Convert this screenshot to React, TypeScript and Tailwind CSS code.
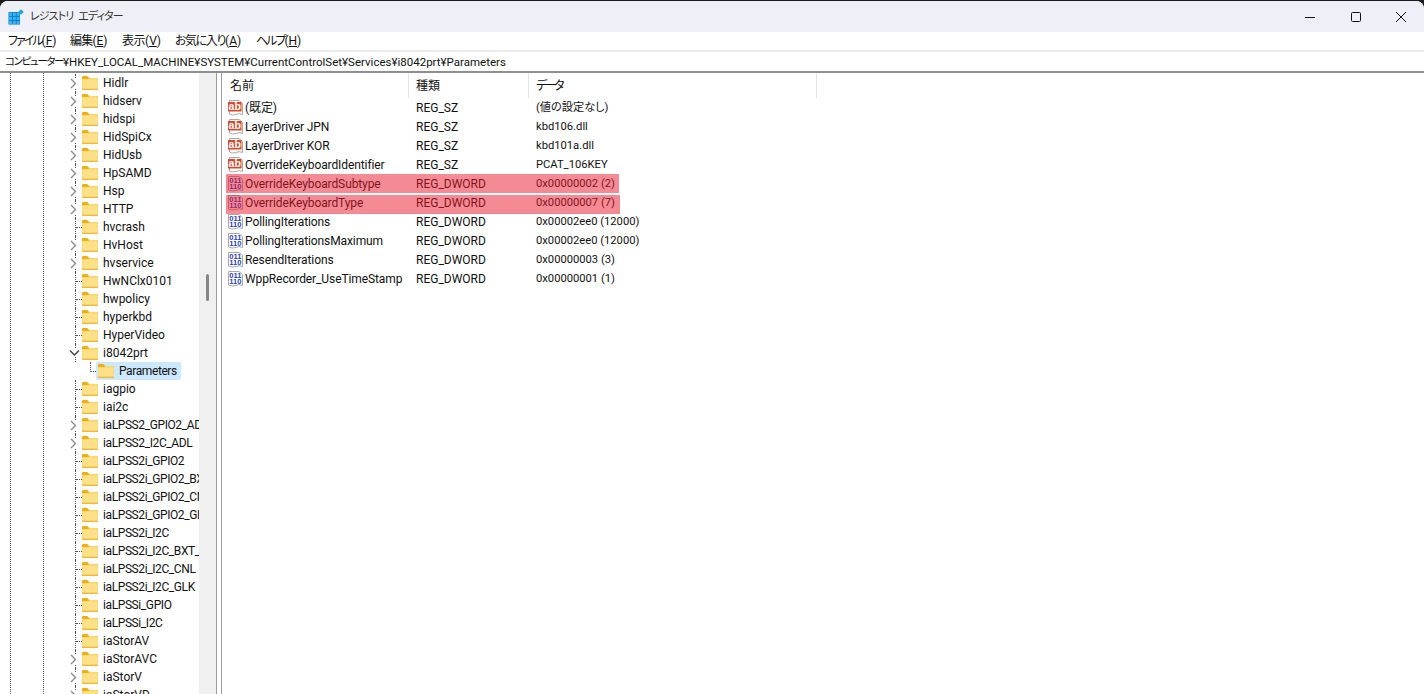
import type { ReactNode } from "react";

// レジストリ エディター — i8042prt\Parameters

type TreeItem = { name: string; expand?: boolean; open?: boolean };

const TREE: TreeItem[] = [
  { name: "Hidlr", expand: true },
  { name: "hidserv", expand: true },
  { name: "hidspi", expand: true },
  { name: "HidSpiCx", expand: true },
  { name: "HidUsb", expand: true },
  { name: "HpSAMD", expand: true },
  { name: "Hsp", expand: true },
  { name: "HTTP", expand: true },
  { name: "hvcrash" },
  { name: "HvHost", expand: true },
  { name: "hvservice", expand: true },
  { name: "HwNClx0101" },
  { name: "hwpolicy" },
  { name: "hyperkbd" },
  { name: "HyperVideo" },
  { name: "i8042prt", open: true },
  { name: "Parameters" },
  { name: "iagpio" },
  { name: "iai2c" },
  { name: "iaLPSS2_GPIO2_ADL", expand: true },
  { name: "iaLPSS2_I2C_ADL", expand: true },
  { name: "iaLPSS2i_GPIO2" },
  { name: "iaLPSS2i_GPIO2_BXT_P" },
  { name: "iaLPSS2i_GPIO2_CNL" },
  { name: "iaLPSS2i_GPIO2_GLK" },
  { name: "iaLPSS2i_I2C" },
  { name: "iaLPSS2i_I2C_BXT_P" },
  { name: "iaLPSS2i_I2C_CNL" },
  { name: "iaLPSS2i_I2C_GLK" },
  { name: "iaLPSSi_GPIO" },
  { name: "iaLPSSi_I2C" },
  { name: "iaStorAV" },
  { name: "iaStorAVC", expand: true },
  { name: "iaStorV", expand: true },
  { name: "iaStorVD", expand: true },
];

const VALUES = [
  { name: "(既定)", type: "REG_SZ", data: "(値の設定なし)" },
  { name: "LayerDriver JPN", type: "REG_SZ", data: "kbd106.dll" },
  { name: "LayerDriver KOR", type: "REG_SZ", data: "kbd101a.dll" },
  { name: "OverrideKeyboardIdentifier", type: "REG_SZ", data: "PCAT_106KEY" },
  { name: "OverrideKeyboardSubtype", type: "REG_DWORD", data: "0x00000002 (2)" },
  { name: "OverrideKeyboardType", type: "REG_DWORD", data: "0x00000007 (7)" },
  { name: "PollingIterations", type: "REG_DWORD", data: "0x00002ee0 (12000)" },
  { name: "PollingIterationsMaximum", type: "REG_DWORD", data: "0x00002ee0 (12000)" },
  { name: "ResendIterations", type: "REG_DWORD", data: "0x00000003 (3)" },
  { name: "WppRecorder_UseTimeStamp", type: "REG_DWORD", data: "0x00000001 (1)" },
];

function AppIcon() {
  return (
    <svg width="16" height="16" viewBox="0 0 16 16" className="shrink-0">
      <rect x="0.5" y="3" width="11.5" height="12.5" fill="#0b6fc4" />
      <g fill="#35b6f2">
        <rect x="1" y="3.5" width="3" height="3.4" />
        <rect x="4.8" y="3.5" width="3" height="3.4" />
        <rect x="8.6" y="3.5" width="3" height="3.4" />
        <rect x="1" y="7.7" width="3" height="3.3" />
        <rect x="4.8" y="7.7" width="3" height="3.3" />
        <rect x="8.6" y="7.7" width="3" height="3.3" />
        <rect x="1" y="11.8" width="3" height="3.3" />
        <rect x="4.8" y="11.8" width="3" height="3.3" />
        <rect x="8.6" y="11.8" width="3" height="3.3" />
      </g>
      <path d="M13 0.2 L15.8 3 L13 5.8 L10.2 3 Z" fill="#2a9fd8" />
    </svg>
  );
}

function Folder() {
  return (
    <svg width="16" height="14" viewBox="0 0 16 14" className="shrink-0">
      <path d="M0 1.2 Q0 0 1.2 0 H5.2 L7.4 2 H16 V4 H0 Z" fill="#f2ac15" />
      <path d="M0 3 H6 L7.5 2 H15 Q16 2 16 3 V13 Q16 14 15 14 H1 Q0 14 0 13 Z" fill="#fbd768" />
      <path d="M0 12.6 H16 V13 Q16 14 15 14 H1 Q0 14 0 13 Z" fill="#f0b93a" />
      <path d="M0.6 3.6 H15.4 V12.4 H0.6 Z" fill="#fde08a" />
    </svg>
  );
}

function Chevron({ open }: { open?: boolean }) {
  if (open) {
    return (
      <svg width="11" height="8" viewBox="0 0 11 8" className="relative bg-white">
        <path d="M1 1.5 L5.5 6 L10 1.5" fill="none" stroke="#404040" strokeWidth="1.4" />
      </svg>
    );
  }
  return (
    <svg width="7" height="11" viewBox="0 0 7 11" className="relative ml-[1px] bg-white">
      <path d="M1 1 L5.5 5.5 L1 10" fill="none" stroke="#8c8c8c" strokeWidth="1.4" />
    </svg>
  );
}

function TreeRow({ item }: { item: TreeItem }) {
  if (item.name === "Parameters") {
    return (
      <div className="relative flex h-[18px] items-center pl-[96px]">
        <span className="absolute left-[90px] top-0 h-[10px] border-l border-dotted border-[#555]" />
        <span className="absolute left-[91px] top-[9px] w-[5px] border-t border-dotted border-[#555]" />
        <div className="flex h-[18px] w-[85px] items-center rounded-[2px] bg-[#cce8ff] pl-[2px]">
          <Folder />
          <span className="ml-[5px] tracking-[-0.4px]">{item.name}</span>
        </div>
      </div>
    );
  }
  const hasToggle = item.expand || item.open;
  const narrow = item.name.startsWith("iaLPSS");
  return (
    <div className="relative flex h-[18px] items-center">
      <span className="absolute left-[75px] top-0 h-[18px] border-l border-dotted border-[#555]" />
      {!hasToggle && (
        <span className="absolute left-[76px] top-[9px] w-[6px] border-t border-dotted border-[#555]" />
      )}
      <div className="flex w-[82px] shrink-0 justify-end pr-[5px]">
        {item.open ? (
          <span className="-mr-[3px]">
            <Chevron open />
          </span>
        ) : item.expand ? (
          <Chevron />
        ) : null}
      </div>
      <Folder />
      <span className={narrow ? "ml-[5px] whitespace-nowrap tracking-[-0.4px]" : "ml-[5px] whitespace-nowrap"}>
        {item.name}
      </span>
    </div>
  );
}

function AbIcon() {
  return (
    <svg width="17" height="17" viewBox="0 0 17 17" className="shrink-0">
      <path
        d="M2.5 1.5 H12 L15.5 4.5 V15.5 Q12 13.8 9 15.5 Q5.5 16.8 2.5 15 Z"
        fill="#fff"
        stroke="#a9a9a9"
      />
      <rect x="1" y="3" width="13.5" height="9.5" rx="0.5" fill="#d8482c" />
      <text x="7.7" y="11" textAnchor="middle" fontSize="10.5" fontWeight="700" fill="#fff" fontFamily="Liberation Sans, sans-serif">
        ab
      </text>
    </svg>
  );
}

function BinIcon() {
  return (
    <svg width="17" height="17" viewBox="0 0 17 17" className="shrink-0">
      <path
        d="M1.5 1.5 H12 L15.5 4.5 V15.5 Q12 13.8 9 15.5 Q5 16.8 1.5 15 Z"
        fill="#fff"
        stroke="#a9a9a9"
      />
      <text x="8.3" y="8" textAnchor="middle" fontSize="7.6" fontWeight="700" fill="#2b3fc0" fontFamily="Liberation Sans, sans-serif">
        011
      </text>
      <text x="8.3" y="14.2" textAnchor="middle" fontSize="7.6" fontWeight="700" fill="#2b3fc0" fontFamily="Liberation Sans, sans-serif">
        110
      </text>
    </svg>
  );
}

function Menu({ label, hot, kana }: { label: ReactNode; hot: string; kana: string }) {
  return (
    <span className="whitespace-nowrap">
      <span className={kana}>{label}</span>(<u>{hot}</u>)
    </span>
  );
}

function WinBtn({ children }: { children: ReactNode }) {
  return <div className="flex h-full w-[45.5px] items-center justify-center">{children}</div>;
}

export default function App() {
  return (
    <div className="h-screen w-full overflow-hidden bg-[#1c1c1c] pt-px text-[12px] leading-[18px] text-[#111] [font-family:'Roboto','Noto_Sans_CJK_JP',sans-serif] [font-feature-settings:'palt']">
      <div className="flex h-full flex-col overflow-hidden rounded-t-[8px] bg-white">
        {/* title bar */}
        <div className="flex h-[31px] shrink-0 items-center bg-[#eff0f7] pl-[8px]">
          <AppIcon />
          <span className="ml-[6px] text-[11px] tracking-[-0.9px] text-[#333] [word-spacing:3px]">レジストリ エディター</span>
          <div className="ml-auto flex h-full">
            <WinBtn>
              <svg width="10" height="10" viewBox="0 0 10 10"><path d="M0 5.5 H10" stroke="#111" /></svg>
            </WinBtn>
            <WinBtn>
              <svg width="10" height="10" viewBox="0 0 10 10"><rect x="0.5" y="0.5" width="9" height="9" rx="1" fill="none" stroke="#111" /></svg>
            </WinBtn>
            <WinBtn>
              <svg width="10" height="10" viewBox="0 0 10 10"><path d="M0 0 L10 10 M10 0 L0 10" stroke="#111" /></svg>
            </WinBtn>
          </div>
        </div>

        {/* menu */}
        <div className="flex h-[18px] shrink-0 items-center pl-[8px] text-[12px]">
          <span className="w-[62px]"><Menu label="ファイル" hot="F" kana="tracking-[-2px]" /></span>
          <span className="w-[52px]"><Menu label="編集" hot="E" kana="tracking-[-0.8px]" /></span>
          <span className="w-[53px]"><Menu label="表示" hot="V" kana="tracking-[-0.5px]" /></span>
          <span className="w-[81px]"><Menu label="お気に入り" hot="A" kana="tracking-[-1.4px]" /></span>
          <Menu label="ヘルプ" hot="H" kana="tracking-[-2px]" />
        </div>

        {/* address bar */}
        <div className="flex h-[23px] shrink-0 items-center border-y-2 border-t-[#ececec] border-b-[#8f8f8f] pl-[5px] text-[11.5px] whitespace-nowrap">
          <span className="text-[10.5px] tracking-[-1.4px]">コンピューター</span>
          ¥HKEY_LOCAL_MACHINE¥SYSTEM¥CurrentControlSet¥Services¥i8042prt¥Parameters
        </div>

        <div className="flex min-h-0 flex-1">
          {/* tree pane */}
          <div className="flex w-[217px] shrink-0 border-r border-[#9a9a9a]">
            <div className="relative w-[199px] shrink-0 overflow-hidden pt-[1px]">
              <span className="absolute left-[10px] top-0 h-full border-l border-dotted border-[#555]" />
              <span className="absolute left-[43px] top-0 h-full border-l border-dotted border-[#555]" />
              {TREE.map((t) => (
                <TreeRow key={t.name} item={t} />
              ))}
            </div>
            <div className="flex-1 bg-[#f0f0f0] pl-[7px] pt-[201px]">
              <div className="h-[27px] w-[3px] rounded-full bg-[#858585]" />
            </div>
          </div>

          {/* list pane */}
          <div className="relative ml-[4px] min-w-0 flex-1 border-l border-[#9a9a9a]">
            <div className="flex h-[25px] items-center">
              <div className="flex h-full w-[187px] items-center border-r border-[#e5e5e5] pl-[8px]">名前</div>
              <div className="flex h-full w-[120px] items-center border-r border-[#e5e5e5] pl-[7px]">種類</div>
              <div className="flex h-full w-[288px] items-center border-r border-[#e5e5e5] pl-[7px] tracking-[-2.5px]">データ</div>
            </div>
            {VALUES.map((v) => (
              <div key={v.name} className="flex h-[19px] items-center whitespace-nowrap">
                <div className="flex w-[187px] items-center gap-[1px] pl-[5px]">
                  {v.type === "REG_SZ" ? <AbIcon /> : <BinIcon />}
                  <span className="tracking-[-0.1px]">{v.name}</span>
                </div>
                <div className="w-[120px] pl-[7px]">{v.type}</div>
                <div className="pl-[7px] text-[11.2px]">{v.data}</div>
              </div>
            ))}
            <div className="absolute left-[4px] top-[101px] h-[19px] w-[393px] bg-[#e91529]/50" />
            <div className="absolute left-[4px] top-[122px] h-[19px] w-[394px] bg-[#e91529]/50" />
          </div>
        </div>
      </div>
    </div>
  );
}
